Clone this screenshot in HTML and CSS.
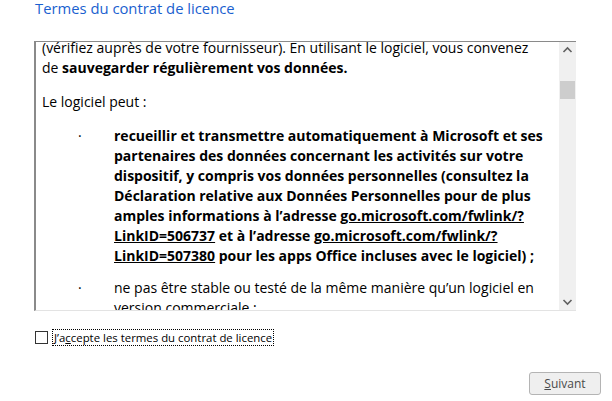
FILE: index.html
```html
<!DOCTYPE html>
<html lang="fr">
<head>
    <meta charset="UTF-8">
    <title>Termes du contrat de licence</title>
    <link rel="stylesheet" href="styles.css">
</head>
<body>

    <h1 class="page-title">Termes du contrat de licence</h1>

    <div class="license-box">
        <div class="license-text">
            <div class="license-scroll">
                <p>(vérifiez auprès de votre fournisseur). En utilisant le logiciel, vous convenez de <b>sauvegarder régulièrement vos données.</b></p>
                <p>Le logiciel peut :</p>
                <ul class="terms">
                    <li><b>recueillir et transmettre automatiquement à Microsoft et ses partenaires des données concernant les activités sur votre dispositif, y compris vos données personnelles (consultez la Déclaration relative aux Données Personnelles pour de plus amples informations à l’adresse <u>go.microsoft.com/fwlink/?LinkID=506737</u> et à l’adresse <u>go.microsoft.com/fwlink/?LinkID=507380</u> pour les apps Office incluses avec le logiciel) ;</b></li>
                    <li>ne pas être stable ou testé de la même manière qu’un logiciel en version commerciale ;</li>
                </ul>
            </div>
        </div>
        <div class="scrollbar">
            <svg class="arrow" width="17" height="17" viewBox="0 0 17 17"><path d="M4.5 10 L8.5 6 L12.5 10" fill="none" stroke="#606060" stroke-width="1.6"/></svg>
            <div class="track"><div class="thumb"></div></div>
            <svg class="arrow" width="17" height="17" viewBox="0 0 17 17"><path d="M4.5 7 L8.5 11 L12.5 7" fill="none" stroke="#606060" stroke-width="1.6"/></svg>
        </div>
    </div>

    <label class="accept">
        <span class="check-box"></span>
        <span class="accept-label">J’a<u>c</u>cepte les termes du contrat de licence</span>
    </label>

    <div class="footer">
        <button class="next-btn"><u>S</u>uivant</button>
    </div>

</body>
</html>
```

FILE: styles.css
```css
* {
    box-sizing: border-box;
    margin: 0;
    padding: 0;
}
body {
    font-family: "Open Sans", "Noto Sans", sans-serif;
    font-size: 14px;
    background-color: #fff;
    color: #000;
    width: 612px;
    height: 401px;
    overflow: hidden;
}
.page-title {
    font-size: 14.8px;
    font-weight: normal;
    color: #1a5fcf;
    padding-left: 35px;
    line-height: 17px;
    height: 41px;
}
.license-box {
    display: flex;
    margin-left: 34px;
    width: 542px;
    height: 270px;
    border-top: 1px solid #8a8a8a;
    border-left: 2px solid #8a8a8a;
    border-bottom: 1px solid #e3e3e3;
}
.license-text {
    flex: 1;
    overflow: hidden;
    padding-left: 6px;
    padding-right: 14px;
}
.license-scroll {
    margin-top: -4px;
    line-height: 20px;
}
.license-scroll p {
    margin-bottom: 14px;
}
.terms {
    list-style: none;
}
.terms li {
    position: relative;
    padding-left: 72px;
    margin-bottom: 12px;
}
.terms li::before {
    content: "·";
    position: absolute;
    left: 36px;
    top: 0;
}
.scrollbar {
    width: 17px;
    background-color: #f0f0f0;
    display: flex;
    flex-direction: column;
}
.arrow {
    display: block;
    flex: none;
}
.track {
    flex: 1;
    padding-top: 22px;
}
.thumb {
    margin: 0 1px;
    height: 18px;
    background-color: #cdcdcd;
}
.accept {
    display: flex;
    align-items: center;
    gap: 4px;
    margin-top: 18px;
    margin-left: 35px;
    height: 17px;
}
.check-box {
    width: 13px;
    height: 13px;
    border: 1px solid #333;
    background-color: #fff;
}
.accept-label {
    border: 1px dotted #000;
    padding: 0 1px;
    line-height: 15px;
    font-size: 11.4px;
}
.footer {
    display: flex;
    justify-content: flex-end;
    padding-right: 11px;
    margin-top: 26px;
}
.next-btn {
    width: 72px;
    height: 23px;
    font-family: inherit;
    font-size: 12px;
    color: #4a4a4a;
    background-color: #efefef;
    border: 1px solid #b4b4b4;
    border-radius: 3px;
}
```
